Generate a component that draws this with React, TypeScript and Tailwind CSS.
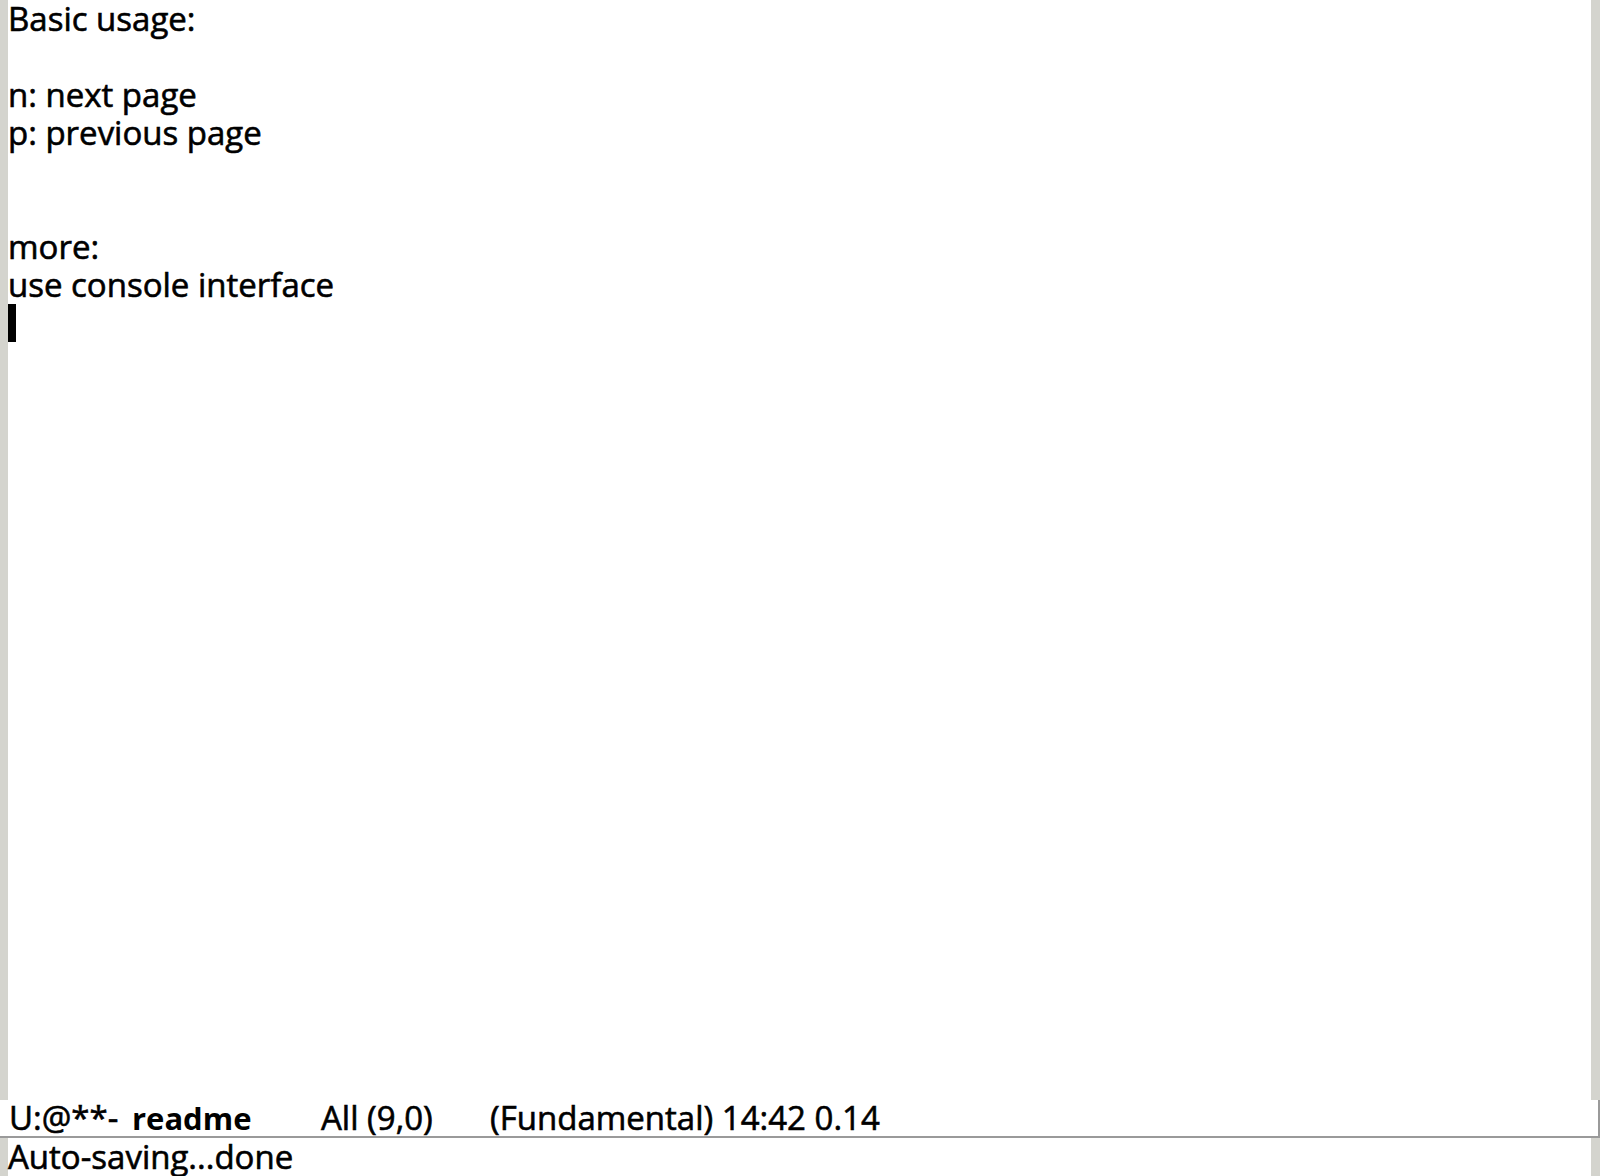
import React from "react";

const lines = [
  "Basic usage:",
  "",
  "n: next page",
  "p: previous page",
  "",
  "",
  "more:",
  "use console interface",
];

export default function App() {
  return (
    <div
      className="flex h-[1176px] w-[1600px] flex-col overflow-hidden bg-white text-black [-webkit-text-stroke:0.6px_black]"
      style={{ fontFamily: '"Open Sans", "Noto Sans", sans-serif' }}
    >
      {/* buffer window */}
      <div className="flex h-[1100px]">
        <div className="w-2 bg-[#d4d4ce]" />
        <div className="flex-1 text-[33px] leading-[38px]">
          {lines.map((l, i) => (
            <div key={i} className="h-[38px] whitespace-pre">
              {l}
            </div>
          ))}
          <div className="h-[38px]">
            <div className="h-[38px] w-2 bg-black" />
          </div>
        </div>
        <div className="w-[9px] bg-[#d4d4ce]" />
      </div>

      {/* mode line */}
      <div className="flex h-[38px] items-center border-b-2 border-r-2 border-[#9a9a9a] pl-[9px] text-[33px] leading-[36px]">
        <span className="w-[123px] whitespace-pre">U:@**-</span>
        <span className="w-[189px] text-[31px] font-bold [-webkit-text-stroke:0px]">readme</span>
        <span className="w-[169px] whitespace-pre">All (9,0)</span>
        <span className="whitespace-pre">(Fundamental) 14:42 0.14</span>
      </div>

      {/* minibuffer */}
      <div className="flex flex-1">
        <div className="w-2 bg-[#d4d4ce]" />
        <div className="flex-1 text-[33px] leading-[38px]">Auto-saving...done</div>
        <div className="w-[9px] bg-[#d4d4ce]" />
      </div>
    </div>
  );
}
